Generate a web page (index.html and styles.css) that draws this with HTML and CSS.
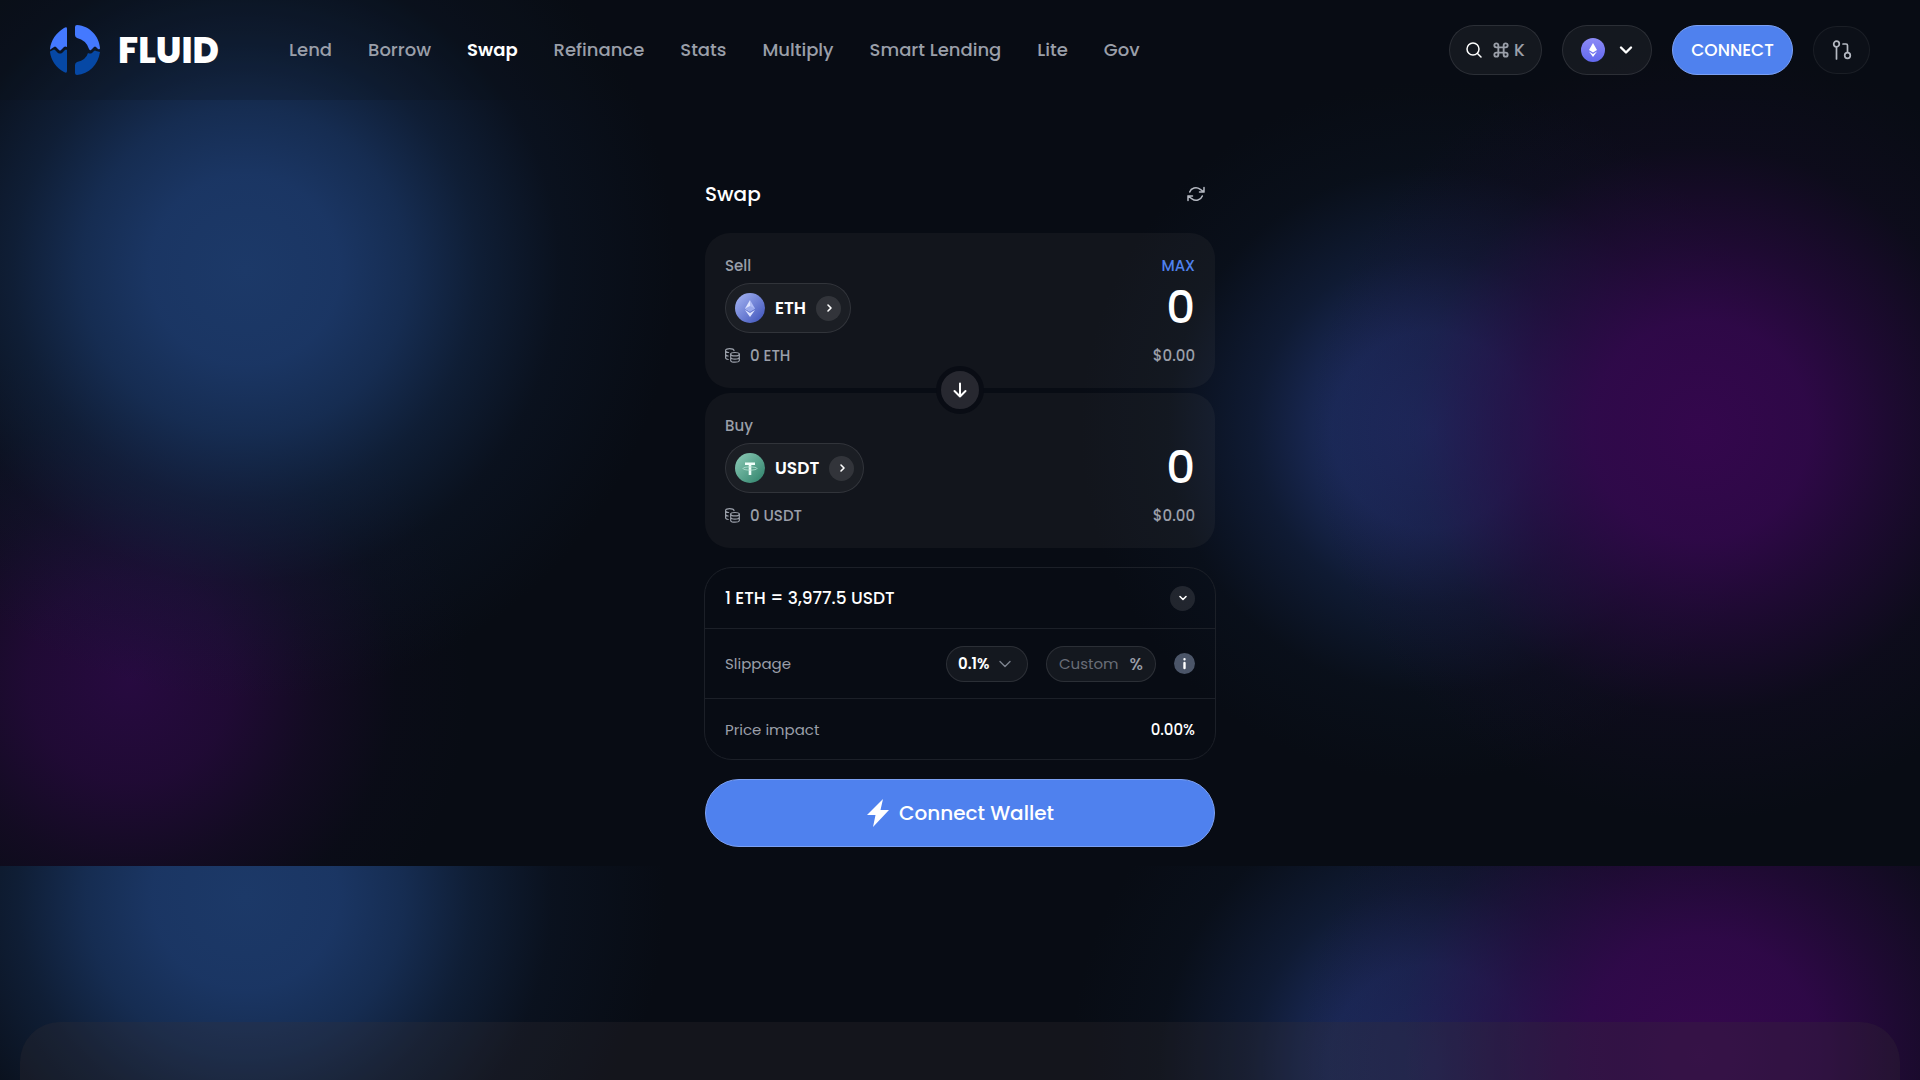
FILE: index.html
```html
<!DOCTYPE html>
<html lang="en">
<head>
<meta charset="utf-8">
<meta name="viewport" content="width=device-width, initial-scale=1">
<title>Fluid – Swap</title>
<link rel="stylesheet" href="styles.css">
</head>
<body>
<header class="topbar">
  <a class="brand" href="#">
    <svg class="brand-mark" viewBox="0 0 50 50" aria-hidden="true">
      <path fill="#4479ff" d="M17 4 C17 2 16 2 14 3 C6 8 1 15 0 24 Q0 25 1 24 L4 22 Q5 21 6 22 L9 25 Q10 26 11 25 L14 22 Q15 21 17 22 Z"/>
      <path fill="#0648a5" d="M17 25 Q16 24 15 25 L12 28 Q10 29 8 28 L5 25 Q4 24 3 25 L1 26 Q0 26 0 27 C1 35 6 43 14 47 Q17 49 17 46 Z"/>
      <path fill="#4479ff" d="M25 2 Q25 0 27 0 C40 1 49 11 50 23 Q50 25 48 24 L46 22 Q45 21 44 22 L41 25 Q40 26 39 24 Q36 15 27 13 Q25 12 25 10 Z"/>
      <path fill="#0648a5" d="M25 48 V40 Q25 38 27 37 Q36 35 38 28 Q40 29 42 28 L44 26 Q45 25 46 26 L50 27 C48 40 39 49 27 50 Q25 50 25 48 Z"/>
    </svg>
    <span class="brand-name">FLUID</span>
  </a>
  <nav class="nav" aria-label="Main">
    <a href="#">Lend</a>
    <a href="#">Borrow</a>
    <a class="active" href="#" aria-current="page">Swap</a>
    <a href="#">Refinance</a>
    <a href="#">Stats</a>
    <a href="#">Multiply</a>
    <a href="#">Smart Lending</a>
    <a href="#">Lite</a>
    <a href="#">Gov</a>
  </nav>
  <div class="actions">
    <button class="pill search" type="button" aria-label="Search">
      <svg width="16" height="16" viewBox="0 0 16 16" fill="none" stroke="#fff" stroke-width="1.500" stroke-linecap="round" aria-hidden="true"><circle cx="7" cy="7" r="6"/><path d="M11.500 11.500 15 15"/></svg>
      <span class="shortcut">
        <svg width="16" height="16" viewBox="0 0 24 24" fill="none" stroke="currentColor" stroke-width="2.800" aria-hidden="true"><path d="M8 8V5a3 3 0 1 0-3 3h14a3 3 0 1 0-3-3v14a3 3 0 1 0 3-3H5a3 3 0 1 0 3 3Z"/></svg>
        K
      </span>
    </button>
    <button class="pill network" type="button" aria-label="Network: Ethereum">
      <svg width="24" height="24" viewBox="0 0 24 24" aria-hidden="true">
        <defs><linearGradient id="net" x1="0" y1="0" x2="0" y2="1"><stop offset="0" stop-color="#8d8bf6"/><stop offset="1" stop-color="#6268ee"/></linearGradient></defs>
        <circle cx="12" cy="12" r="12" fill="url(#net)"/>
        <path fill="#fff" d="M12 5 16 12 12 14.500 8 12Z M8 13.500 12 16 16 13.500 12 19Z"/>
      </svg>
      <svg width="14" height="14" viewBox="0 0 14 14" fill="none" stroke="#fff" stroke-width="2.400" stroke-linecap="round" stroke-linejoin="round" aria-hidden="true"><path d="M2 4.500 7 9.500 12 4.500"/></svg>
    </button>
    <button class="connect" type="button">CONNECT</button>
    <button class="pill activity" type="button" aria-label="Transactions">
      <svg width="20" height="20" viewBox="0 0 20 20" fill="none" stroke="#b5b9c2" stroke-width="1.700" stroke-linecap="round" stroke-linejoin="round" aria-hidden="true"><circle cx="4.500" cy="4" r="2.800"/><path d="M4.500 7v12M11 4h3q1.500 0 1.500 1.500V12"/><circle cx="15.500" cy="15.500" r="2.800"/></svg>
    </button>
  </div>
</header>

<main class="hero">
  <section class="swap" aria-label="Swap tokens">
    <div class="swap-head">
      <h1>Swap</h1>
      <button class="plain" type="button" aria-label="Refresh">
        <svg width="18" height="16" viewBox="0 0 18 16" fill="none" stroke="#b5b9c2" stroke-width="1.500" stroke-linecap="round" stroke-linejoin="round" aria-hidden="true"><path d="M17 1.500v4.500h-4.500M1 14.500V10h4.500M2.700 6A6.500 6 0 0 1 13 3.200L17 6M1 10l4 2.800A6.500 6 0 0 0 15.300 10"/></svg>
      </button>
    </div>

    <div class="token-card">
      <div class="line label-line"><label for="sell">Sell</label><button class="max" type="button">MAX</button></div>
      <div class="line">
        <button class="token" type="button">
          <svg width="30" height="30" viewBox="0 0 30 30" aria-hidden="true">
            <defs><linearGradient id="eth" x1="0" y1="0" x2="1" y2="1"><stop offset="0" stop-color="#a9b8f5"/><stop offset="1" stop-color="#3a4fb8"/></linearGradient></defs>
            <circle cx="15" cy="15" r="15" fill="url(#eth)"/>
            <path fill="#dde3ff" d="M15 7 10 15.500 15 18.500Z"/><path fill="#b0bdf5" d="M15 7 20 15.500 15 18.500Z"/><path fill="#9aa9ec" d="M10 15.500 15 13 20 15.500 15 18.500Z"/><path fill="#dde3ff" d="M10 17 15 20 20 17 15 24Z"/>
          </svg>
          <span>ETH</span>
          <span class="dot"><svg width="10" height="10" viewBox="0 0 10 10" fill="none" stroke="#fff" stroke-width="1.600" stroke-linecap="round" stroke-linejoin="round" aria-hidden="true"><path d="M4 2 7 5 4 8"/></svg></span>
        </button>
        <input class="amount" id="sell" type="text" inputmode="decimal" value="0">
      </div>
      <div class="line foot">
        <span class="balance"><svg width="15" height="15" viewBox="0 0 15 15" fill="none" stroke="currentColor" stroke-width="1.200" stroke-linecap="round" aria-hidden="true"><path d="M9 2.600C8.500 .1 .600 .1 .600 2.400v7.600q.4 1.200 2.600 1.500M.600 2.800Q1 4.300 3.600 4.500M.600 6.500Q1 7.800 3.200 8"/><ellipse cx="10" cy="6.200" rx="4.300" ry="1.700"/><path d="M5.700 6.200v6.200c0 2.400 8.600 2.400 8.600 0V6.200M5.700 9.300c0 2.400 8.600 2.400 8.600 0"/></svg>0 ETH</span>
        <span>$0.00</span>
      </div>
      <button class="flip" type="button" aria-label="Switch tokens">
        <svg width="16" height="16" viewBox="0 0 16 16" fill="none" stroke="#fff" stroke-width="2" stroke-linecap="round" stroke-linejoin="round" aria-hidden="true"><path d="M8 1.500v13M2.500 9 8 14.500 13.500 9"/></svg>
      </button>
    </div>

    <div class="token-card">
      <div class="line label-line"><label for="buy">Buy</label></div>
      <div class="line">
        <button class="token" type="button">
          <svg width="30" height="30" viewBox="0 0 30 30" aria-hidden="true">
            <defs><linearGradient id="usdt" x1="0" y1="0" x2="1" y2="1"><stop offset="0" stop-color="#8fcdb9"/><stop offset="1" stop-color="#2c8068"/></linearGradient></defs>
            <circle cx="15" cy="15" r="15" fill="url(#usdt)"/>
            <path fill="#f1fffa" d="M10 9.500h10v2.500h-3.700V22h-2.600V12H10Z"/>
            <ellipse cx="15" cy="15.500" rx="7" ry="1.600" fill="none" stroke="#b9e2d4" stroke-width=".8"/>
          </svg>
          <span>USDT</span>
          <span class="dot"><svg width="10" height="10" viewBox="0 0 10 10" fill="none" stroke="#fff" stroke-width="1.600" stroke-linecap="round" stroke-linejoin="round" aria-hidden="true"><path d="M4 2 7 5 4 8"/></svg></span>
        </button>
        <input class="amount" id="buy" type="text" inputmode="decimal" value="0">
      </div>
      <div class="line foot">
        <span class="balance"><svg width="15" height="15" viewBox="0 0 15 15" fill="none" stroke="currentColor" stroke-width="1.200" stroke-linecap="round" aria-hidden="true"><path d="M9 2.600C8.500 .1 .600 .1 .600 2.400v7.600q.4 1.200 2.600 1.500M.600 2.800Q1 4.300 3.600 4.500M.600 6.500Q1 7.800 3.200 8"/><ellipse cx="10" cy="6.200" rx="4.300" ry="1.700"/><path d="M5.700 6.200v6.200c0 2.400 8.600 2.400 8.600 0V6.200M5.700 9.300c0 2.400 8.600 2.400 8.600 0"/></svg>0 USDT</span>
        <span>$0.00</span>
      </div>
    </div>

    <div class="details">
      <div class="row rate">
        <span>1 ETH = 3,977.5 USDT</span>
        <button class="dot" type="button" aria-label="Toggle details"><svg width="10" height="10" viewBox="0 0 10 10" fill="none" stroke="#fff" stroke-width="1.600" stroke-linecap="round" stroke-linejoin="round" aria-hidden="true"><path d="M2 3.500 5 6.500 8 3.500"/></svg></button>
      </div>
      <div class="row slippage">
        <label for="slip">Slippage</label>
        <div class="slip-controls">
          <span class="select-wrap">
            <select id="slip"><option>0.1%</option><option>0.5%</option><option>1%</option></select>
            <svg width="12" height="8" viewBox="0 0 12 8" fill="none" stroke="#7d828e" stroke-width="1.400" stroke-linecap="round" stroke-linejoin="round" aria-hidden="true"><path d="M1 1.500 6 6.500 11 1.500"/></svg>
          </span>
          <span class="custom"><input type="text" placeholder="Custom" aria-label="Custom slippage"><span>%</span></span>
          <button class="info" type="button" aria-label="About slippage"><svg width="21" height="21" viewBox="0 0 21 21" aria-hidden="true"><circle cx="10.500" cy="10.500" r="10.500" fill="#4b5568"/><path stroke="#fff" stroke-width="2.400" stroke-linecap="round" d="M10.500 10v5M10.500 6.200v.1"/></svg></button>
        </div>
      </div>
      <div class="row impact"><span>Price impact</span><strong>0.00%</strong></div>
    </div>

    <button class="wallet" type="button">
      <svg width="24" height="28" viewBox="0 0 24 28" fill="#fff" aria-hidden="true"><path d="M17 0 1 16h8.500L7 28 23 11h-8.500Z"/></svg>
      Connect Wallet
    </button>
  </section>
</main>

<section class="lower"><div class="panel"></div></section>
</body>
</html>
```
FILE: styles.css
```css
* { box-sizing: border-box; }

html { overflow-x: hidden; background: #080c14; }

body {
  margin: 0;
  min-height: 100vh;
  max-height: 100vh;
  overflow: hidden;
  display: flex;
  flex-direction: column;
  background: #080c14;
  color: #fff;
  font-family: Poppins, Inter, "Open Sans", sans-serif;
  font-size: 15px;
  font-weight: 500;
}

a { color: inherit; text-decoration: none; }
button, input, select { font: inherit; color: inherit; }
button { margin: 0; padding: 0; border: 0; background: none; cursor: pointer; }
svg { display: block; flex: none; }

/* Header */
.topbar {
  position: absolute;
  inset: 0 0 auto;
  z-index: 2;
  display: flex;
  align-items: center;
  height: 100px;
  padding: 0 50px;
  background: rgba(9, 13, 21, 0.2);
}
.brand { display: flex; align-items: center; gap: 18px; }
.brand-mark { width: 50px; height: 50px; }
.brand-name { font-size: 36px; font-weight: 800; }
.nav {
  display: flex;
  gap: 36px;
  margin-left: 70px;
  padding-bottom: 2px;
  font-size: 18px;
  color: #9a9fa9;
  white-space: nowrap;
}
.nav .active { color: #fff; font-weight: 600; }
.actions { display: flex; align-items: center; gap: 20px; margin-left: auto; }
.pill {
  display: flex;
  align-items: center;
  justify-content: center;
  height: 50px;
  border: 1px solid rgba(255, 255, 255, 0.1);
  border-radius: 25px;
  background: rgba(255, 250, 255, 0.05);
}
.search { width: 93px; gap: 11px; font-size: 17px; }
.shortcut { display: flex; align-items: center; gap: 5px; color: #9a9fa9; }
.network { width: 90px; gap: 14px; }
.connect {
  width: 121px;
  height: 50px;
  border: 1px solid #7ba0f3;
  border-radius: 25px;
  background: #4f81ee;
  font-size: 17px;
}
.activity {
  width: 57px;
  height: 48px;
  border-color: rgba(255, 255, 255, 0.06);
  background: rgba(255, 255, 255, 0.02);
}

/* Swap form */
.hero {
  display: flex;
  justify-content: center;
  flex: none;
  padding: 170px 20px 19px;
  background:
    radial-gradient(circle 430px at 245px 270px, #1c3968 0%, rgba(27, 55, 102, 0.97) 22%, rgba(24, 50, 92, 0.85) 38%, rgba(20, 42, 76, 0.6) 54%, rgba(16, 32, 58, 0.27) 73%, transparent 100%),
    radial-gradient(circle 340px at 130px 680px, #270a40 0%, rgba(36, 10, 58, 0.85) 30%, rgba(28, 11, 46, 0.55) 55%, rgba(18, 11, 34, 0.22) 78%, transparent 100%),
    radial-gradient(circle 390px at calc(100% - 220px) 430px, #34074d 0%, rgba(50, 8, 76, 0.9) 28%, rgba(42, 9, 66, 0.65) 48%, rgba(28, 11, 48, 0.25) 73%, transparent 100%),
    radial-gradient(circle 350px at calc(100% - 490px) 430px, #1e2f66 0%, rgba(29, 46, 98, 0.88) 28%, rgba(22, 40, 80, 0.52) 50%, rgba(14, 28, 50, 0.2) 75%, transparent 100%),
    #080c14;
}
.swap { width: 510px; }
.swap-head {
  display: flex;
  align-items: center;
  justify-content: space-between;
  height: 48px;
  margin-bottom: 15px;
  padding-right: 10px;
}
.swap-head h1 { margin: 0; font-size: 20px; font-weight: 500; }
.token-card {
  position: relative;
  height: 155px;
  padding: 20px;
  border-radius: 25px;
  background: rgba(255, 240, 220, 0.045);
}
.token-card + .token-card { margin-top: 5px; }
.line { display: flex; align-items: center; justify-content: space-between; color: #9a9fa9; }
.label-line { height: 24px; margin-bottom: 6px; }
.max { color: #4f81ee; }
.token {
  display: flex;
  align-items: center;
  gap: 10px;
  height: 50px;
  padding: 0 9px;
  border: 1px solid rgba(255, 255, 255, 0.1);
  border-radius: 25px;
  background: rgba(255, 255, 255, 0.04);
  color: #fff;
  font-size: 17px;
  font-weight: 600;
}
.dot {
  display: flex;
  align-items: center;
  justify-content: center;
  width: 25px;
  height: 25px;
  border-radius: 50%;
  background: rgba(255, 255, 255, 0.1);
}
.amount {
  width: 200px;
  padding: 0;
  border: 0;
  outline: 0;
  background: none;
  color: #fff;
  font-size: 45px;
  line-height: 50px;
  height: 50px;
  text-align: right;
}
.foot { height: 24px; margin-top: 10px; }
.balance { display: flex; align-items: center; gap: 10px; }
.flip {
  position: absolute;
  left: 50%;
  bottom: -26px;
  z-index: 1;
  display: grid;
  place-items: center;
  width: 48px;
  height: 48px;
  margin-left: -24px;
  border: 5px solid #090c14;
  border-radius: 50%;
  background: #272830;
}

/* Quote details */
.details {
  margin: 19px -1px;
  border: 1px solid #1c2028;
  border-radius: 28px;
}
.row {
  display: flex;
  align-items: center;
  justify-content: space-between;
  padding: 0 20px;
  color: #9a9fa9;
}
.row + .row { border-top: 1px solid #1c2028; }
.rate { height: 60px; color: #fff; font-size: 17px; }
.slippage { height: 70px; }
.impact { height: 61px; }
.slippage label,
.impact span { font-weight: 400; }
.impact strong { color: #fff; font-weight: 500; }
.slip-controls { display: flex; align-items: center; gap: 18px; }
.select-wrap,
.custom {
  display: flex;
  align-items: center;
  height: 36px;
  padding: 0 12px;
  border: 1px solid rgba(255, 255, 255, 0.1);
  border-radius: 18px;
  background: rgba(255, 255, 255, 0.05);
}
.select-wrap { position: relative; width: 82px; padding: 0; }
.select-wrap select {
  appearance: none;
  width: 100%;
  height: 34px;
  padding: 0 28px 0 11px;
  border: 0;
  outline: 0;
  background: none;
  color: #fff;
  font-size: 15px;
  font-weight: 600;
}
.select-wrap option { background: #14171d; }
.select-wrap svg { position: absolute; right: 16px; top: 13px; pointer-events: none; }
.custom { width: 110px; font-size: 17px; }
.custom input {
  flex: 1;
  min-width: 0;
  padding: 0;
  border: 0;
  outline: 0;
  background: none;
  font-size: 15px;
  font-weight: 400;
}
.custom input::placeholder { color: #696d77; opacity: 1; }
.wallet {
  display: flex;
  align-items: center;
  justify-content: center;
  gap: 9px;
  width: 100%;
  height: 68px;
  border: 1px solid #7ba0f3;
  border-radius: 34px;
  background: #4f81ee;
  font-size: 20px;
}

/* Lower section */
.lower {
  flex: 1;
  display: flex;
  padding: 156px 20px 0;
  background:
    radial-gradient(circle 420px at 245px 30px, #1c3968 0%, rgba(27, 55, 102, 0.97) 22%, rgba(24, 50, 92, 0.85) 38%, rgba(20, 42, 76, 0.6) 54%, rgba(16, 32, 58, 0.27) 73%, transparent 100%),
    radial-gradient(circle 400px at calc(100% - 220px) 190px, #36084e 0%, rgba(50, 8, 76, 0.9) 30%, rgba(42, 9, 66, 0.65) 50%, rgba(28, 11, 48, 0.25) 75%, transparent 100%),
    radial-gradient(circle 360px at calc(100% - 490px) 200px, #1e2f66 0%, rgba(29, 46, 98, 0.88) 28%, rgba(22, 40, 80, 0.52) 50%, rgba(14, 28, 50, 0.2) 75%, transparent 100%),
    #080c14;
}
.panel {
  flex: 1;
  border-radius: 40px 40px 0 0;
  background: rgba(56, 46, 50, 0.25);
}
```
